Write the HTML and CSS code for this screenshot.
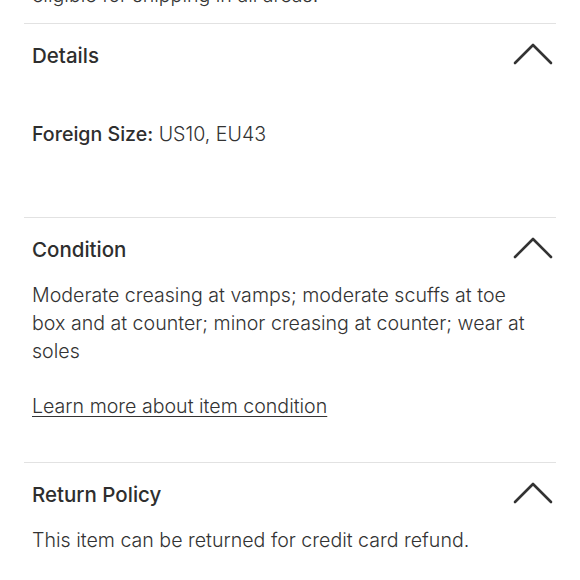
FILE: index.html
```html
<!DOCTYPE html>
<html>

<head>
    <meta charset="UTF-8">
    <title>Item details</title>
    <link rel="stylesheet" href="styles.css">
</head>

<body>
    <div class="item-info">
        <div class="shipping-note">
            <p>eligible for shipping in all areas.</p>
        </div>

        <div class="section">
            <div class="section-head">
                <div class="section-title">Details</div>
                <svg class="chevron" width="40" height="22" viewBox="0 0 40 22">
                    <polyline points="2,20 20,2 38,20" />
                </svg>
            </div>
            <div class="section-body details-body">
                <p><b>Foreign Size:</b> US10, EU43</p>
            </div>
        </div>

        <div class="section">
            <div class="section-head">
                <div class="section-title">Condition</div>
                <svg class="chevron" width="40" height="22" viewBox="0 0 40 22">
                    <polyline points="2,20 20,2 38,20" />
                </svg>
            </div>
            <div class="section-body">
                <p>Moderate creasing at vamps; moderate scuffs at toe box and at counter; minor creasing at counter; wear at soles</p>
                <p class="more"><a href="#" class="more-link">Learn more about item condition</a></p>
            </div>
        </div>

        <div class="section">
            <div class="section-head">
                <div class="section-title">Return Policy</div>
                <svg class="chevron" width="40" height="22" viewBox="0 0 40 22">
                    <polyline points="2,20 20,2 38,20" />
                </svg>
            </div>
            <div class="section-body">
                <p>This item can be returned for credit card refund.</p>
            </div>
        </div>
    </div>
</body>

</html>
```

FILE: styles.css
```css
body {
    margin: 0;
    background: #ffffff;
    color: #333333;
    font-family: "Inter", "Noto Sans", sans-serif;
}

p {
    margin: 0;
}

.item-info {
    padding: 0 24px;
    margin-top: -19px;
}

.shipping-note {
    padding: 0 8px 14px;
    font-size: 19.6px;
    font-weight: 300;
    line-height: 28px;
}

.section {
    border-top: 1px solid #e2e2e2;
}

.section-head {
    display: flex;
    justify-content: space-between;
    align-items: center;
    padding: 18px 3px 0 8px;
}

.section-title {
    font-size: 20.5px;
    font-weight: 500;
    line-height: 28px;
    color: #2e2e2e;
}

.chevron {
    fill: none;
    stroke: #333333;
    stroke-width: 2.6;
    stroke-linecap: round;
    stroke-linejoin: round;
    margin-top: -4px;
}

.section-body {
    padding: 17px 24px 42px 8px;
    font-size: 19.6px;
    font-weight: 300;
    line-height: 28px;
    color: #333333;
}

.details-body {
    padding-top: 50px;
    padding-bottom: 69px;
}

.section-body b {
    font-weight: 500;
    color: #2e2e2e;
}

.more {
    margin-top: 27px;
}

.more-link {
    color: #333333;
    text-decoration: underline;
    text-decoration-thickness: 1px;
    text-underline-offset: 3px;
}
```
